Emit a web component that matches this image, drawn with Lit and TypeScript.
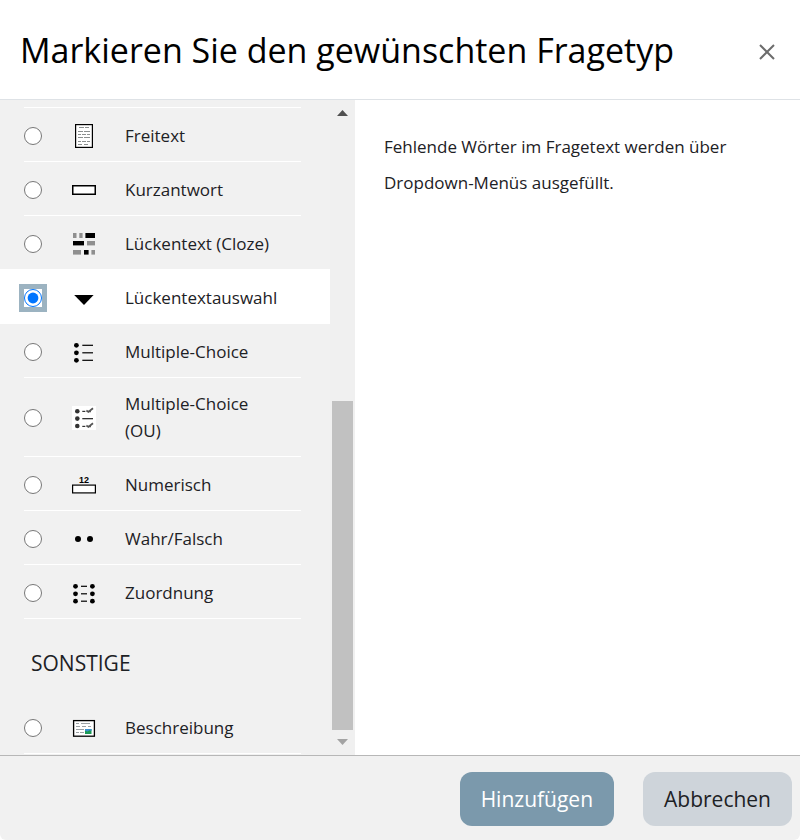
import { LitElement, html, svg, css, nothing, type TemplateResult } from "lit";
import { customElement, state } from "lit/decorators.js";
import { classMap } from "lit/directives/class-map.js";

interface QuestionType {
  id: string;
  label: string;
  icon: TemplateResult;
  tall?: boolean;
}

const bullet = (cx: number, cy: number, r = 2.4) => svg`<circle cx=${cx} cy=${cy} r=${r} />`;
const dash = (x: number, y: number, width: number, height = 1) =>
  svg`<rect x=${x} y=${y} width=${width} height=${height} />`;

const essay = svg`
  <rect x="3.6" y="0.6" width="16.8" height="22.8" fill="#fff" stroke="#000" stroke-width="1.2" />
  <g fill="#8b8f8f">
    ${dash(7, 3, 5)}${dash(13, 3, 4)}
    ${dash(6, 7, 5)}${dash(12, 7, 6)}
    ${dash(6, 10, 3)}${dash(10, 10, 4)}${dash(15, 10, 3)}
    ${dash(6, 13, 5)}${dash(12, 13, 6)}
    ${dash(6, 17, 3)}${dash(10, 17, 4)}${dash(15, 17, 3)}
    ${dash(6, 20, 4)}${dash(12, 20, 4)}
  </g>`;

const shortAnswer = svg`<rect x="0.75" y="7.75" width="22.5" height="8.5" fill="#fff" stroke="#000" stroke-width="1.5" />`;

const cloze = svg`
  <g fill="#8f8f8f">
    ${dash(1, 1, 3.5, 5)}${dash(7.3, 1, 3.3, 5)}
    ${dash(15, 9, 8, 4.4)}
    ${dash(1, 18, 8, 4.6)}${dash(19.4, 18, 3.6, 4.6)}
  </g>
  ${dash(13.4, 1, 9.6, 5)}${dash(1, 9, 11, 4.4)}${dash(12, 18, 4.6, 4.6)}`;

const dropdown = svg`<path d="M2.2 9h19.4L12 19z" />`;

const multiChoice = svg`${[5.3, 12.8, 20.3].map(
  (y) => svg`${bullet(4.4, y)}${dash(10.3, y - 0.6, 10.7, 1.2)}`
)}`;

const multiChoiceOu = svg`
  <rect width="24" height="24" fill="#fff" />
  <g fill="#333">
    ${bullet(5.3, 5.2, 2.3)}${bullet(5.3, 12.6, 2.3)}${bullet(5.3, 20, 2.3)}
    ${dash(10.3, 12, 10.7, 1.3)}
    ${dash(10.3, 4.8, 3, 1.2)}${dash(10.3, 19.8, 3, 1.2)}
  </g>
  <g fill="none" stroke="#555" stroke-width="1.8">
    <path d="M14.4 4.6l2 1.3L21 2.2M15 5.4h4" />
    <path d="M14.4 19.6l2 1.3L21 17.2M15 20.4h4" />
  </g>`;

const numerical = svg`
  <rect x="0.6" y="12.1" width="22.8" height="7.8" fill="#fff" stroke="#000" stroke-width="1.2" />
  <text x="12" y="10" text-anchor="middle" font-family="Liberation Sans, sans-serif" font-weight="700" font-size="9">12</text>`;

const trueFalse = svg`${bullet(6, 12, 3)}${bullet(18, 12, 3)}`;

const matching = svg`${[5.3, 12.8, 20.2].map(
  (y) => svg`${bullet(3.5, y)}${dash(9, y - 0.6, 6, 1.2)}${bullet(20.4, y)}`
)}`;

const description = svg`
  <rect x="1.6" y="4.6" width="20.8" height="15.6" fill="#fff" stroke="#000" stroke-width="1.3" />
  <g fill="#9aa0a4">
    ${dash(4, 7, 3)}${dash(9, 7, 9)}
    ${dash(4, 10, 4)}${dash(10, 10, 4)}${dash(16, 10, 3)}
    ${dash(4, 13, 8)}
    ${dash(4, 16, 3)}${dash(8, 16, 4)}
  </g>
  <rect x="13" y="13" width="6.5" height="5" fill="#1b9a55" />
  <path d="M13 13h6.5v2l-2-.8-2 1.2-2.5-.6z" fill="#3a8fd0" />`;

const questions: QuestionType[] = [
  { id: "essay", label: "Freitext", icon: essay },
  { id: "shortanswer", label: "Kurzantwort", icon: shortAnswer },
  { id: "cloze", label: "Lückentext (Cloze)", icon: cloze },
  { id: "gapselect", label: "Lückentextauswahl", icon: dropdown },
  { id: "multichoice", label: "Multiple-Choice", icon: multiChoice },
  { id: "oumultiresponse", label: "Multiple-Choice (OU)", icon: multiChoiceOu, tall: true },
  { id: "numerical", label: "Numerisch", icon: numerical },
  { id: "truefalse", label: "Wahr/Falsch", icon: trueFalse },
  { id: "match", label: "Zuordnung", icon: matching },
];

const others: QuestionType[] = [{ id: "description", label: "Beschreibung", icon: description }];

@customElement("app-root")
export class AppRoot extends LitElement {
  @state() private selected = "gapselect";

  static styles = css`
    :host {
      display: flex;
      flex-direction: column;
      height: 100vh;
      background: #fff;
      color: #1d2125;
      font-family: "Open Sans", "Noto Sans", sans-serif;
      font-size: 17px;
    }
    * {
      box-sizing: border-box;
    }
    .header {
      display: flex;
      align-items: center;
      justify-content: space-between;
      height: 100px;
      padding: 4px 20px 0;
      border-bottom: 1px solid #dee2e6;
    }
    .title {
      margin: 0;
      font-size: 34px;
      font-weight: 400;
      line-height: 58px;
      padding-bottom: 4px;
      color: #000;
    }
    .close {
      display: flex;
      padding: 5px;
      border: 0;
      background: none;
      color: #6c6c6c;
    }
    .close svg {
      width: 16px;
      height: 16px;
    }
    .body {
      flex: 1;
      min-height: 0;
      display: grid;
      grid-template-columns: minmax(0, 355fr) minmax(0, 445fr);
      grid-template-rows: minmax(0, 1fr);
    }
    .chooser {
      display: flex;
      min-height: 0;
      background: #f1f1f1;
    }
    .options {
      flex: 1;
      min-width: 0;
      overflow-y: auto;
      scrollbar-width: none;
    }
    .list {
      margin: 0;
      padding: 0;
      list-style: none;
    }
    .list.first {
      padding-top: 7px;
    }
    .list.first::before {
      content: "";
      display: block;
      height: 1px;
      margin: 0 29px 0 24px;
      background: #fff;
    }
    .item.active {
      background: #fff;
      box-shadow: 0 -1px 0 #fff;
    }
    .row {
      display: flex;
      align-items: center;
      min-height: 54px;
      margin: 0 29px 0 24px;
      padding: 14px 0 11px;
      border-bottom: 1px solid #fff;
      line-height: 27px;
    }
    .tall .row {
      padding: 12px 0 11px;
    }
    .radio {
      flex: none;
      width: 18px;
      height: 18px;
      margin: 0;
      outline: none;
    }
    .active .radio {
      box-shadow: 0 0 0 5px #9cb3c1;
    }
    .icon {
      flex: none;
      width: 24px;
      height: 24px;
      margin: 0 29px 0 30px;
    }
    .name {
      padding: 0 24px 1px 0;
    }
    .group {
      margin: 0;
      padding: 29px 31px 21px;
      font-size: 21px;
      font-weight: 400;
      line-height: 31px;
      text-transform: uppercase;
    }
    .scrollbar {
      flex: none;
      display: flex;
      flex-direction: column;
      width: 25px;
      padding: 0 2px;
      background: #f0f0f0;
    }
    .arrow {
      flex: none;
      width: 21px;
      height: 25px;
    }
    .up {
      fill: #505050;
    }
    .down {
      fill: #a3a3a3;
    }
    .gap {
      flex: 276;
    }
    .thumb {
      flex: 329;
      background: #c1c1c1;
    }
    .detail {
      padding: 29px;
    }
    .text {
      margin: 0;
      line-height: 36px;
    }
    .footer {
      display: flex;
      align-items: center;
      justify-content: flex-end;
      gap: 29px;
      height: 85px;
      padding: 2px 8px 0;
      border-top: 1px solid #b7b7b7;
      border-radius: 0 0 6px 6px;
      background: #f1f1f1;
    }
    .button {
      height: 54px;
      padding: 0 21px;
      border: 0;
      border-radius: 12px;
      font: inherit;
      font-size: 21px;
    }
    .primary {
      background: #7b99ac;
      color: #fff;
    }
    .secondary {
      background: #ced4da;
      color: #1d2125;
    }
  `;

  private renderItem(q: QuestionType) {
    const active = q.id === this.selected;
    return html`
      <li class=${classMap({ item: true, active, tall: !!q.tall })}>
        <label class="row">
          <input
            class="radio"
            type="radio"
            name="qtype"
            .value=${q.id}
            .checked=${active}
            @change=${() => (this.selected = q.id)}
          />
          <svg class="icon" viewBox="0 0 24 24" aria-hidden="true">${q.icon}</svg>
          <span class="name">${q.label}</span>
        </label>
      </li>
    `;
  }

  render() {
    return html`
      <header class="header">
        <h1 class="title">Markieren Sie den gewünschten Fragetyp</h1>
        <button class="close" type="button" aria-label="Schließen">
          <svg viewBox="0 0 16 16" aria-hidden="true">
            <path d="M1 1l14 14M15 1L1 15" fill="none" stroke="currentColor" stroke-width="2" />
          </svg>
        </button>
      </header>
      <main class="body">
        <section class="chooser">
          <div class="options">
            <ul class="list first">
              ${questions.map((q) => this.renderItem(q))}
            </ul>
            <h2 class="group">Sonstige</h2>
            <ul class="list">
              ${others.map((q) => this.renderItem(q))}
            </ul>
          </div>
          <div class="scrollbar" aria-hidden="true">
            <svg class="arrow up" viewBox="0 0 21 25"><path d="M5 16L10.5 10L16 16z" /></svg>
            <div class="gap"></div>
            <div class="thumb"></div>
            <svg class="arrow down" viewBox="0 0 21 25"><path d="M5 9L10.5 15L16 9z" /></svg>
          </div>
        </section>
        <section class="detail">
          ${this.selected === "gapselect"
            ? html`<p class="text">Fehlende Wörter im Fragetext werden über Dropdown-Menüs ausgefüllt.</p>`
            : nothing}
        </section>
      </main>
      <footer class="footer">
        <button class="button primary" type="button">Hinzufügen</button>
        <button class="button secondary" type="button">Abbrechen</button>
      </footer>
    `;
  }
}
